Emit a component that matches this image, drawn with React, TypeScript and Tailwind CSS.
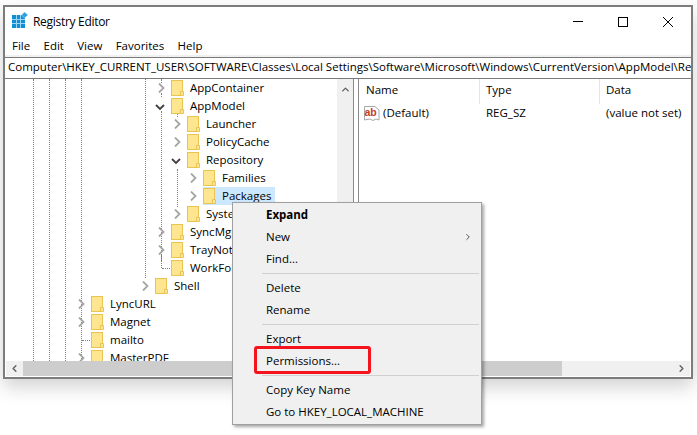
import { ChevronLeft, ChevronRight, ChevronUp } from 'lucide-react'

const FONT = "font-['Open_Sans',sans-serif] text-[11.5px] text-[#000]"

type Row = { name: string; x: number; arrow?: 'open' | 'closed'; selected?: boolean }

// x is the folder's left edge inside the tree panel
const rows: Row[] = [
  { name: 'AppContainer', x: 166, arrow: 'closed' },
  { name: 'AppModel', x: 166, arrow: 'open' },
  { name: 'Launcher', x: 182, arrow: 'closed' },
  { name: 'PolicyCache', x: 182, arrow: 'closed' },
  { name: 'Repository', x: 182, arrow: 'open' },
  { name: 'Families', x: 198, arrow: 'closed' },
  { name: 'Packages', x: 198, arrow: 'closed', selected: true },
  { name: 'SystemAppData', x: 182, arrow: 'closed' },
  { name: 'SyncMgr', x: 166, arrow: 'closed' },
  { name: 'TrayNotify', x: 166, arrow: 'closed' },
  { name: 'WorkFolders', x: 166 },
  { name: 'Shell', x: 150, arrow: 'closed' },
  { name: 'LyncURL', x: 86, arrow: 'closed' },
  { name: 'Magnet', x: 86, arrow: 'closed' },
  { name: 'mailto', x: 86 },
  { name: 'MasterPDF', x: 86, arrow: 'closed' },
]

// tree guide lines: left, top, height inside the tree panel
const guides = [
  [28, 0, 282], [44, 0, 282], [60, 0, 282], [76, 0, 282],
  [140, 0, 199], [156, 0, 4], [156, 14, 4], [156, 32, 150], [156, 176, 13],
  [172, 34, 4], [172, 90, 38],
]

function Folder() {
  return (
    <svg width="13" height="16" viewBox="0 0 13 16" className="shrink-0">
      <rect x="0.5" y="0.5" width="11" height="15" fill="#fde68f" stroke="#e9c550" />
      <path d="M9.5 15.5v-4h3v4z" fill="#fde68f" stroke="#e9c550" />
    </svg>
  )
}

function Arrow({ open }: { open: boolean }) {
  return open ? (
    <svg width="10" height="10" viewBox="0 0 10 10" className="absolute left-[-16px] top-[5px]">
      <path d="M1 3l4 4 4-4" fill="none" stroke="#404040" strokeWidth="1.8" />
    </svg>
  ) : (
    <svg width="10" height="10" viewBox="0 0 10 10" className="absolute left-[-15px] top-[4px]">
      <path d="M3 0.5l4.5 4.5L3 9.5" fill="none" stroke="#a6a6a6" strokeWidth="1.8" />
    </svg>
  )
}

function TreeRow({ row }: { row: Row }) {
  return (
    <div className="h-[18px] flex shrink-0" style={{ paddingLeft: row.x }}>
      <div
        className={`relative flex items-center h-[18px] pr-1 gap-[6px] whitespace-nowrap ${row.selected ? 'bg-[#cce8ff]' : ''}`}
      >
        {row.arrow && <Arrow open={row.arrow === 'open'} />}
        {!row.arrow && <span className="absolute left-[-9px] top-[9px] w-[8px] border-t border-dotted border-[#808080]" />}
        <Folder />
        <span>{row.name}</span>
      </div>
    </div>
  )
}

function MenuItem({ label, bold, more }: { label: string; bold?: boolean; more?: boolean }) {
  return (
    <div className={`h-[22px] flex items-center justify-between pl-[33px] pr-[8px] ${bold ? 'font-bold' : ''}`}>
      <span>{label}</span>
      {more && <ChevronRight size={10} strokeWidth={2} className="text-[#333]" />}
    </div>
  )
}

function Sep() {
  return <div className="h-[7px] flex items-center pl-[29px] pr-[2px]"><div className="h-px w-full bg-[#d0d0d0]" /></div>
}

function RegIcon() {
  return (
    <svg width="17" height="17" viewBox="0 0 17 17">
      <rect x="0" y="3" width="13" height="13" fill="#0f8fd6" />
      <path d="M4.5 3v13M8.5 3v13M0 7.5h13M0 11.5h13" stroke="#9bd7f2" strokeWidth="1" />
      <path d="M12.5 0l3.5 3-3.5 3-3-3z" fill="#2aa0dc" stroke="#cdeaf8" strokeWidth="0.6" />
    </svg>
  )
}

export default function App() {
  return (
    <div className={`relative w-[697px] h-[435px] bg-white overflow-hidden ${FONT}`}>
      <div className="pt-[5px] pl-[3px]">
        <div className="w-[690px] h-[374px] flex flex-col border-2 border-[#7c7c7c] bg-white shadow-[0_8px_18px_rgba(0,0,0,0.18)]">
          {/* title bar */}
          <div className="h-[30px] flex items-center shrink-0 pl-[7px] pb-[1px]">
            <div className="mb-[2px] flex"><RegIcon /></div>
            <span className="ml-[4px] text-[12px] tracking-[-0.3px]">Registry Editor</span>
            <div className="ml-auto flex items-center gap-[35px] pr-[18px]">
              <div className="w-[10px] h-px bg-black" />
              <div className="w-[10px] h-[10px] border border-black" />
              <svg width="10" height="10" viewBox="0 0 10 10">
                <path d="M0 0l10 10M10 0L0 10" stroke="#000" strokeWidth="1" />
              </svg>
            </div>
          </div>
          {/* menu */}
          <div className="h-[18px] flex items-center gap-[13.3px] pl-[7px] shrink-0">
            <span>File</span>
            <span>Edit</span>
            <span>View</span>
            <span>Favorites</span>
            <span>Help</span>
          </div>
          {/* address */}
          <div className="border-t-2 border-[#f0f0f0]">
            <div className="h-[22px] flex items-center pl-[3px] pb-[2px] border-y border-[#7a7a7a] overflow-hidden whitespace-nowrap shrink-0">
              Computer\HKEY_CURRENT_USER\SOFTWARE\Classes\Local Settings\Software\Microsoft\Windows\CurrentVersion\AppModel\Repository\Packages
            </div>
          </div>
          {/* panes */}
          <div className="flex-1 min-h-0 flex flex-col">
            <div className="flex-1 min-h-0 flex">
              <div className="relative w-[332px] shrink-0 overflow-hidden pl-0">
                {guides.map(([left, top, height]) => (
                  <span
                    key={`${left}-${top}`}
                    className="absolute border-l border-dotted border-[#808080]"
                    style={{ left, top, height }}
                  />
                ))}
                {rows.map(row => <TreeRow key={row.name} row={row} />)}
              </div>
              <div className="w-[16px] shrink-0 bg-[#f0f0f0] flex justify-center pt-[5px]">
                <ChevronUp size={11} strokeWidth={3} className="text-[#606060]" />
              </div>
              <div className="w-[6px] shrink-0 border-x border-[#8a8a8a]" />
              <div className="flex-1 min-w-0">
                <div className="h-[25px] flex">
                  <div className="w-[121px] pl-[7px] pt-[2px] border-r border-[#e5e5e5]">Name</div>
                  <div className="w-[120px] pl-[6px] pt-[2px] border-r border-[#e5e5e5]">Type</div>
                  <div className="pl-[6px] pt-[2px]">Data</div>
                </div>
                <div className="flex items-center h-[18px]">
                  <div className="w-[121px] pl-[5px] flex items-center gap-[3px]">
                    <svg width="16" height="17" viewBox="0 0 16 17" className="shrink-0">
                      <path d="M0.5 1.5h10.5l4 3.5v10l-3-1-3 1.5-3-1.5-5.5 1z" fill="#fff" stroke="#a8a8a8" />
                      <text x="0.5" y="11" fontSize="10.5" fontWeight="700" fill="#c8391f" fontFamily="'Liberation Sans', sans-serif">ab</text>
                    </svg>
                    <span>(Default)</span>
                  </div>
                  <div className="w-[120px] pl-[6px]">REG_SZ</div>
                  <div className="pl-[6px] whitespace-nowrap">(value not set)</div>
                </div>
              </div>
            </div>
            {/* horizontal scrollbar */}
            <div className="h-[15px] flex items-stretch mb-[1px] bg-[#f0f0f0] shrink-0 ml-[1px] mr-[1px]">
              <div className="w-[17px] flex items-center justify-center">
                <ChevronLeft size={11} strokeWidth={3} className="text-[#606060]" />
              </div>
              <div className="w-[539px] bg-[#cdcdcd]" />
              <div className="ml-auto w-[17px] flex items-center justify-center">
                <ChevronRight size={11} strokeWidth={3} className="text-[#606060]" />
              </div>
            </div>
          </div>
        </div>
      </div>

      {/* context menu */}
      <div className="absolute left-[232px] top-[202px] w-[250px] h-[223px] py-[1px] bg-[#f0f0f0] border border-[#a0a0a0] shadow-[2px_2px_3px_rgba(0,0,0,0.35)]">
        <MenuItem label="Expand" bold />
        <MenuItem label="New" more />
        <MenuItem label="Find..." />
        <Sep />
        <MenuItem label="Delete" />
        <MenuItem label="Rename" />
        <Sep />
        <MenuItem label="Export" />
        <MenuItem label="Permissions..." />
        <Sep />
        <MenuItem label="Copy Key Name" />
        <MenuItem label="Go to HKEY_LOCAL_MACHINE" />
      </div>
      <div className="absolute left-[254px] top-[346px] w-[117px] h-[28px] border-[3px] border-[#f5141c] rounded-[3px]" />
    </div>
  )
}
